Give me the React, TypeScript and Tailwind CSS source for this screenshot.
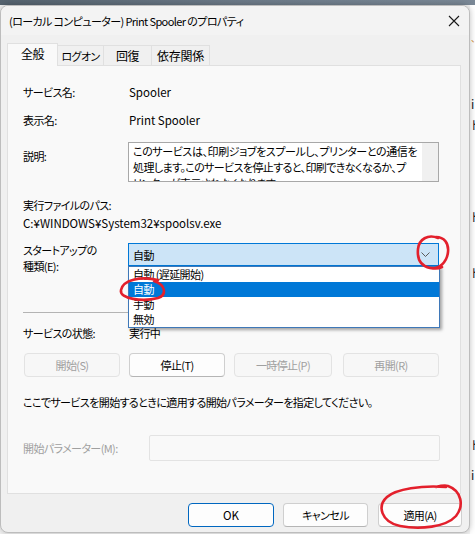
import React from "react";

const Btn = ({ label, w, disabled }: { label: string; w: string; disabled?: boolean }) => (
  <div
    className={`${w} h-[24px] flex items-center justify-center rounded-[4px] border ${
      disabled
        ? "border-[#e3e3e3] bg-[#f7f7f7] text-[#a0a0a0]"
        : "border-[#cfcfcf] border-b-[#b5b5b5] bg-[#fdfdfd] text-black"
    }`}
  >
    {label}
  </div>
);

export default function App() {
  return (
    <div className="relative w-[475px] h-[534px] overflow-hidden bg-[#f4f4f4] font-['Noto_Sans_CJK_JP',sans-serif] [font-feature-settings:'palt'] text-[11px] tracking-[-0.6px] leading-[16px] text-black">
      {/* desktop strip */}
      <div className="h-[5px] bg-gradient-to-r from-[#55636f] via-[#6c7a88] to-[#7a8896]" />

      {/* background window fragments at right */}
      <div className="absolute left-[470px] top-[5px] w-[5px] h-[529px] bg-white">
        <span className="absolute left-[1px] top-[29px] text-[9px] leading-[10px] text-[#d08a2a]">、</span>
        <span className="absolute left-[1px] top-[91px] text-[12px] text-[#222]">i</span>
        <span className="absolute left-[1px] top-[112px] text-[12px] text-[#222]">ト</span>
        <span className="absolute left-[1px] top-[204px] text-[12px] text-[#222]">ト</span>
        <span className="absolute left-[1px] top-[260px] text-[12px] text-[#222]">ト</span>
        <span className="absolute left-[1px] top-[432px] text-[12px] text-[#222]">ト</span>
        <span className="absolute left-[1px] top-[462px] text-[12px] text-[#222]">i</span>
      </div>

      {/* dialog window */}
      <div className="absolute left-0 top-[5px] w-[470px] h-[528px] rounded-[8px] border border-[#bdbdbd] bg-[#f0f0f0] overflow-hidden flex flex-col shadow-[0_0_6px_rgba(0,0,0,0.25)]">
        {/* title bar */}
        <div className="h-[29px] bg-[#f3f3f3] flex items-center justify-between pl-[8px] pr-[8px]">
          <span className="whitespace-nowrap">(ローカル コンピューター) Print Spooler のプロパティ</span>
          <svg width="12" height="12" viewBox="0 0 12 12" className="mr-[1px]">
            <path d="M1 1 L11 11 M11 1 L1 11" stroke="#1a1a1a" strokeWidth="1.1" fill="none" />
          </svg>
        </div>

        {/* body */}
        <div className="pl-[6px] pt-[8px]">
          {/* tabs */}
          <div className="h-[22px] flex items-end">
            <div className="relative z-10 -mb-px h-[23px] w-[51px] bg-[#f9f9f9] border border-b-0 border-[#e0e0e0] flex items-center justify-center pb-[3px] text-[12px]">
              全般
            </div>
            <div className="h-[20px] w-[46px] bg-[#f0f0f0] border border-l-0 border-b-0 border-[#e0e0e0] flex items-center justify-center">
              ログオン
            </div>
            <div className="h-[20px] w-[48px] bg-[#f0f0f0] border border-l-0 border-b-0 border-[#e0e0e0] flex items-center justify-center text-[12px]">
              回復
            </div>
            <div className="h-[20px] w-[58px] bg-[#f0f0f0] border border-l-0 border-b-0 border-[#e0e0e0] flex items-center justify-center text-[12px] tracking-[-0.3px]">
              依存関係
            </div>
          </div>

          {/* panel */}
          <div className="w-[454px] h-[429px] border border-[#e0e0e0] bg-[#f9f9f9] pl-[15px] flex flex-col">
            <div className="mt-[18px] flex h-[16px]">
              <div className="w-[106px]">サービス名:</div>
              <div className="text-[11.5px] tracking-normal">Spooler</div>
            </div>
            <div className="mt-[12px] flex h-[16px]">
              <div className="w-[106px]">表示名:</div>
              <div className="text-[11.5px] tracking-normal">Print Spooler</div>
            </div>
            <div className="mt-[14px] flex">
              <div className="w-[105px] mt-[6px]">説明:</div>
              <div className="w-[311px] h-[40px] border border-[#a8a8a8] bg-white flex overflow-hidden">
                <div className="flex-1 pl-[4px] overflow-hidden">
                  <div className="whitespace-nowrap tracking-[-0.4px]">このサービスは、印刷ジョブをスプールし、プリンターとの通信を</div>
                  <div className="whitespace-nowrap">処理します。このサービスを停止すると、印刷できなくなるか、プ</div>
                  <div className="whitespace-nowrap">リンターが表示されなくなります。</div>
                </div>
                <div className="w-[16px] h-full bg-[#f0f0f0]" />
              </div>
            </div>
            <div className="mt-[15px] h-[16px]">実行ファイルのパス:</div>
            <div className="mt-[2px] h-[16px] text-[11.5px] tracking-normal">C:¥WINDOWS¥System32¥spoolsv.exe</div>

            <div className="mt-[12px] flex items-start">
              <div className="w-[105px] -mt-px">
                <div>スタートアップの</div>
                <div>種類(E):</div>
              </div>
              <div className="relative w-[311px]">
                <div className="h-[23px] border border-[#0078d7] bg-[#cce4f7] flex items-center justify-between pl-[4px] pr-[8px]">
                  <span>自動</span>
                  <svg width="9" height="5" viewBox="0 0 9 5">
                    <path d="M0.5 0.5 L4.5 4.5 L8.5 0.5" stroke="#5a5a5a" strokeWidth="1" fill="none" />
                  </svg>
                </div>
                {/* dropdown list */}
                <div className="absolute left-0 top-[23px] z-20 w-[312px] border border-[#3f78b8] bg-white shadow-[2px_2px_3px_rgba(0,0,0,0.35)] flex flex-col">
                  <div className="h-[15px] leading-[15px] px-[4px]">自動 (遅延開始)</div>
                  <div className="h-[15px] leading-[15px] px-[4px] bg-[#0078d7] text-white">自動</div>
                  <div className="h-[15px] leading-[15px] px-[4px]">手動</div>
                  <div className="h-[15px] leading-[15px] px-[4px]">無効</div>
                </div>
              </div>
            </div>

            <div className="mt-[38px] h-px w-[416px] bg-[#b4b4b4]" />

            <div className="mt-[12px] flex h-[16px]">
              <div className="w-[106px]">サービスの状態:</div>
              <div>実行中</div>
            </div>

            <div className="mt-[12px] ml-px flex">
              <Btn label="開始(S)" w="w-[96px]" disabled />
              <div className="w-[9px]" />
              <Btn label="停止(T)" w="w-[96px]" />
              <div className="w-[9px]" />
              <Btn label="一時停止(P)" w="w-[98px]" disabled />
              <div className="w-[11px]" />
              <Btn label="再開(R)" w="w-[96px]" disabled />
            </div>

            <div className="mt-[17px] h-[16px] whitespace-nowrap">
              ここでサービスを開始するときに適用する開始パラメーターを指定してください。
            </div>

            <div className="mt-[25px] flex items-center">
              <div className="w-[126px] text-[#a0a0a0]">開始パラメーター(M):</div>
              <div className="w-[291px] h-[26px] border border-[#e3e3e3] bg-[#f9f9f9] rounded-[2px]" />
            </div>
          </div>
        </div>

        {/* bottom buttons */}
        <div className="mt-[9px] flex justify-end pr-[7px]">
          <div className="w-[86px] h-[24px] rounded-[4px] border-[1.5px] border-[#0067c0] bg-[#fdfdfd] flex items-center justify-center text-[11.5px] tracking-normal">
            OK
          </div>
          <div className="w-[9px]" />
          <div className="w-[85px] h-[24px] rounded-[4px] border border-[#cfcfcf] border-b-[#b5b5b5] bg-[#fdfdfd] flex items-center justify-center">
            キャンセル
          </div>
          <div className="w-[10px]" />
          <div className="w-[84px] h-[24px] rounded-[4px] border border-[#cfcfcf] border-b-[#b5b5b5] bg-[#fdfdfd] flex items-center justify-center">
            適用(A)
          </div>
        </div>
      </div>

      {/* red hand-drawn annotations */}
      <svg className="absolute inset-0 pointer-events-none z-30" width="475" height="534" viewBox="0 0 475 534">
        <g stroke="#e3202c" strokeWidth="2.6" fill="none" strokeLinecap="round" strokeLinejoin="round">
          <path d="M438 238 C428 234 419 239 418 249 C417 259 421 266 430 268 C439 270 447 262 448 252 C449 243 444 237 436 237 M431 268 C436 269 440 268 442 267" />
          <path d="M158 280 C140 276 123 280 121 290 C119 299 143 302 158 298 C167 295 166 285 154 281" />
          <path d="M446 487 C422 485 396 489 387 497 C377 506 381 522 400 526 C420 530 446 527 456 516 C464 506 462 491 448 486 C444 485 440 486 436 487" />
        </g>
      </svg>
    </div>
  );
}
